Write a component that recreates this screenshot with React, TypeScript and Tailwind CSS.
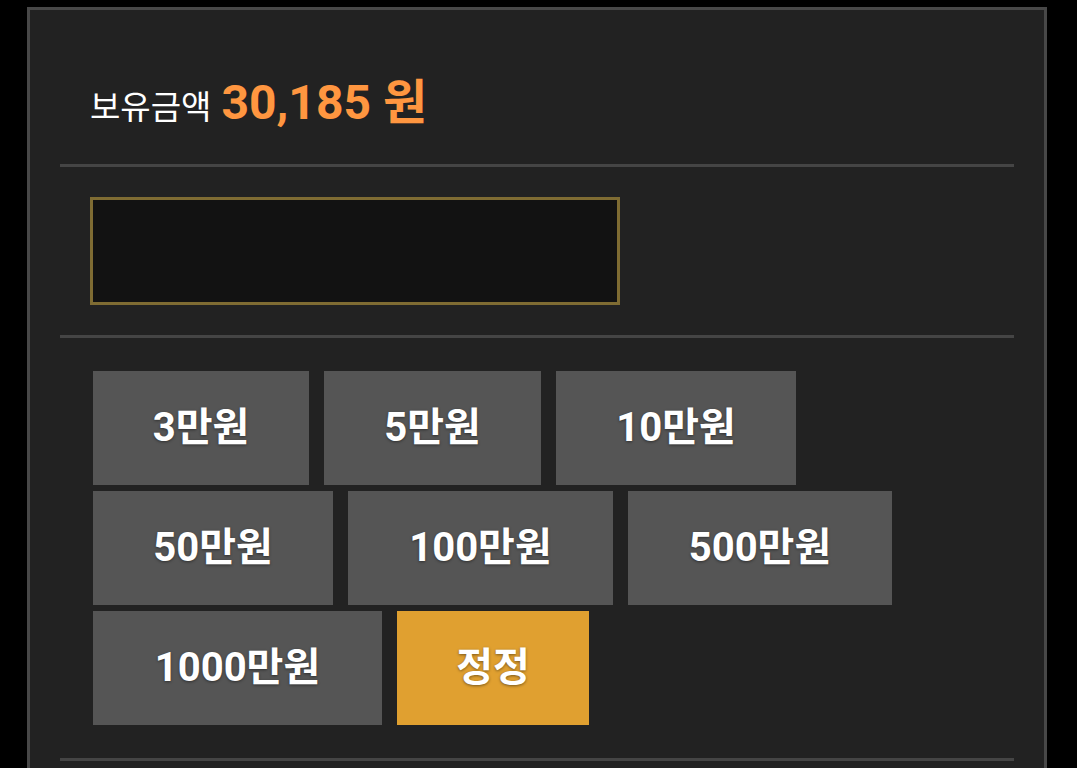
import React, { useState } from 'react';

interface AmountButton {
  label: string;
  width: string;
  accent?: boolean;
}

const buttons: AmountButton[] = [
  { label: '3만원', width: 'w-[216px]' },
  { label: '5만원', width: 'w-[217px]' },
  { label: '10만원', width: 'w-[240px]' },
  { label: '50만원', width: 'w-[240px]' },
  { label: '100만원', width: 'w-[265px]' },
  { label: '500만원', width: 'w-[264px]' },
  { label: '1000만원', width: 'w-[289px]' },
  { label: '정정', width: 'w-[192px]', accent: true },
];

const App = () => {
  const [amount, setAmount] = useState('');

  return (
    <div className="min-h-screen bg-black pt-[7px] pl-[27px] font-['Roboto','Noto_Sans_CJK_KR',sans-serif]">
      <div className="w-[1020px] min-h-[780px] border-[3px] border-[#484848] bg-[#222222] px-[30px]">
        {/* Balance */}
        <div className="h-[154px] pt-[32px] pl-[30px] flex items-center">
          <div className="flex items-baseline">
            <span className="text-[33px] text-white">보유금액</span>
            <span className="ml-[10px] text-[48px] font-bold text-[#ff9640]">30,185 원</span>
          </div>
        </div>

        <div className="h-[3px] bg-[#454545]" />

        {/* Amount input */}
        <div className="py-[30px] pl-[30px]">
          <input
            type="text"
            value={amount}
            onChange={(e) => setAmount(e.target.value)}
            className="block w-[530px] h-[108px] border-[3px] border-[#7f6c33] bg-[#121212] px-4 text-[36px] text-white outline-none"
          />
        </div>

        <div className="h-[3px] bg-[#454545]" />

        {/* Quick amount buttons */}
        <div className="p-[33px] flex flex-wrap gap-x-[15px] gap-y-[6px]">
          {buttons.map((b) => (
            <button
              key={b.label}
              onClick={() => b.accent ? setAmount('') : setAmount(b.label)}
              className={`${b.width} h-[114px] flex items-center justify-center text-[40px] font-bold text-white [text-shadow:0_1px_3px_rgba(0,0,0,0.45)] ${
                b.accent ? 'bg-[#e0a030]' : 'bg-[#555555]'
              }`}
            >
              {b.label}
            </button>
          ))}
        </div>

        <div className="h-[3px] bg-[#454545]" />
      </div>
    </div>
  );
};

export default App;
